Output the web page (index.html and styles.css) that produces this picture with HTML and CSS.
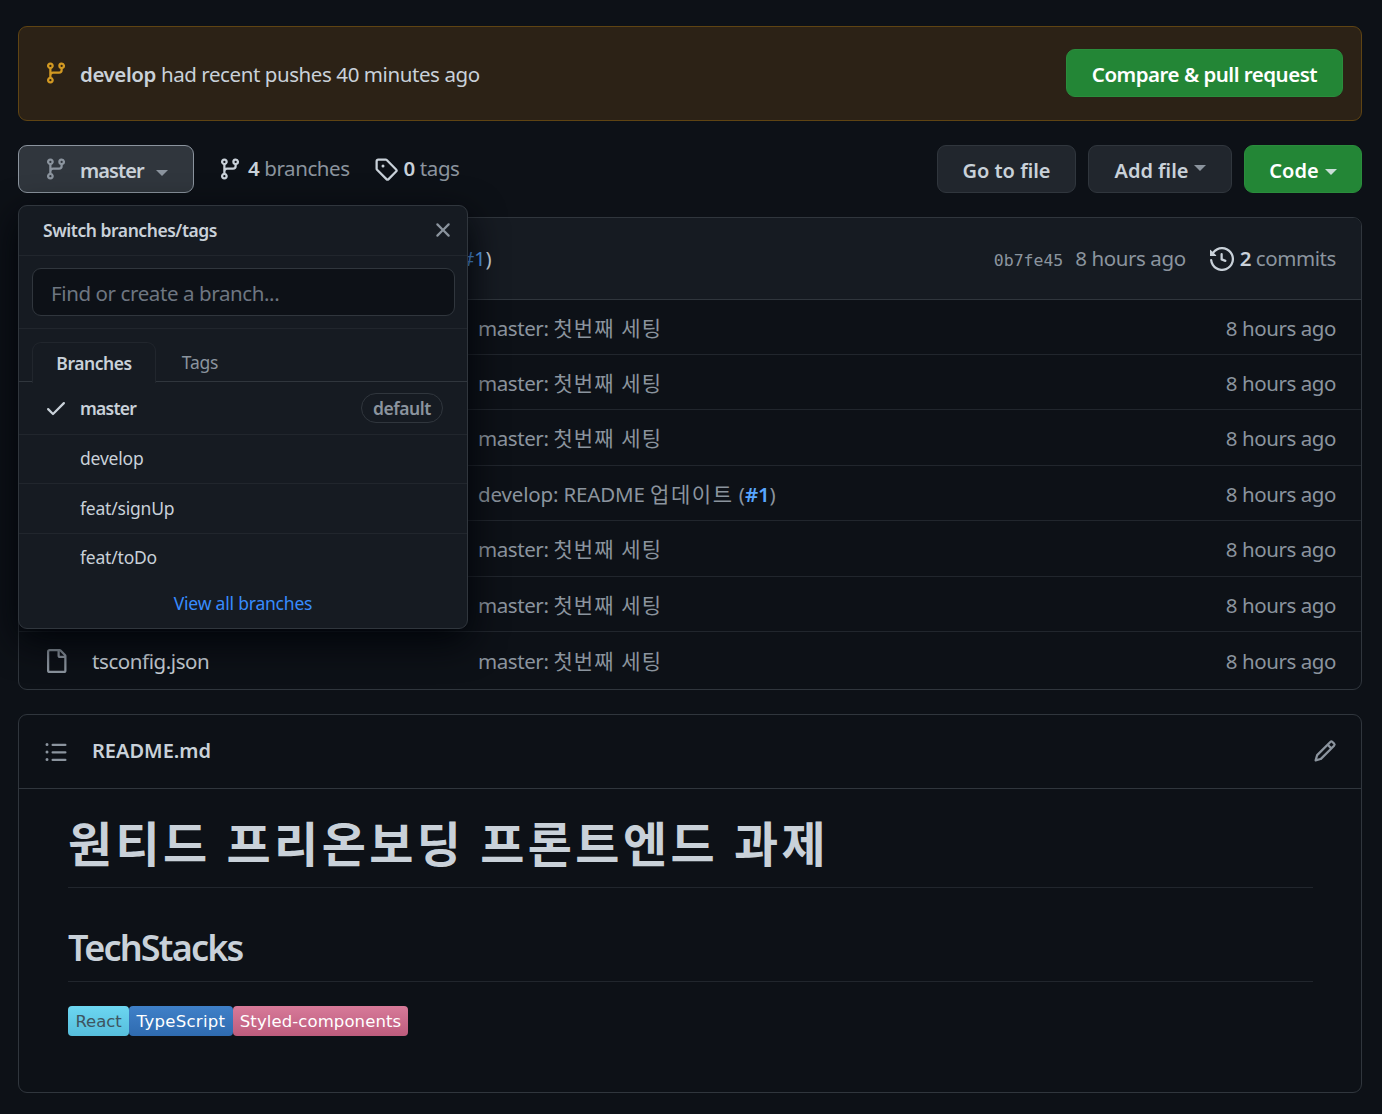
FILE: index.html
```html
<!DOCTYPE html>
<html lang="en">
<head>
<meta charset="utf-8">
<title>Repository</title>
<link rel="stylesheet" href="styles.css">
</head>
<body>
<svg class="sprite" aria-hidden="true">
  <symbol id="i-branch" viewBox="0 0 16 16"><path d="M9.5 3.25a2.25 2.25 0 1 1 3 2.122V6A2.5 2.5 0 0 1 10 8.5H6a1 1 0 0 0-1 1v1.128a2.251 2.251 0 1 1-1.5 0V5.372a2.25 2.25 0 1 1 1.5 0v1.836A2.493 2.493 0 0 1 6 7h4a1 1 0 0 0 1-1v-.628A2.25 2.25 0 0 1 9.5 3.25Zm-6 0a.75.75 0 1 0 1.5 0 .75.75 0 0 0-1.5 0Zm8.25-.75a.75.75 0 1 0 0 1.5.75.75 0 0 0 0-1.5ZM4.25 12a.75.75 0 1 0 0 1.5.75.75 0 0 0 0-1.5Z"/></symbol>
  <symbol id="i-tag" viewBox="0 0 16 16"><path d="M1 7.775V2.75C1 1.784 1.784 1 2.75 1h5.025c.464 0 .91.184 1.238.513l6.25 6.25a1.75 1.75 0 0 1 0 2.474l-5.026 5.026a1.75 1.75 0 0 1-2.474 0l-6.25-6.25A1.752 1.752 0 0 1 1 7.775Zm1.5 0c0 .066.026.13.073.177l6.25 6.25a.25.25 0 0 0 .354 0l5.025-5.025a.25.25 0 0 0 0-.354l-6.25-6.25a.25.25 0 0 0-.177-.073H2.75a.25.25 0 0 0-.25.25ZM6 5a1 1 0 1 1 0 2 1 1 0 0 1 0-2Z"/></symbol>
  <symbol id="i-x" viewBox="0 0 16 16"><path d="M3.72 3.72a.75.75 0 0 1 1.06 0L8 6.94l3.22-3.22a.749.749 0 0 1 1.275.326.749.749 0 0 1-.215.734L9.06 8l3.22 3.22a.749.749 0 0 1-.326 1.275.749.749 0 0 1-.734-.215L8 9.06l-3.22 3.22a.751.751 0 0 1-1.042-.018.751.751 0 0 1-.018-1.042L6.94 8 3.72 4.78a.75.75 0 0 1 0-1.06Z"/></symbol>
  <symbol id="i-check" viewBox="0 0 16 16"><path d="M13.78 4.22a.75.75 0 0 1 0 1.06l-7.25 7.25a.75.75 0 0 1-1.06 0L2.22 9.28a.751.751 0 0 1 .018-1.042.751.751 0 0 1 1.042-.018L6 10.94l6.72-6.72a.75.75 0 0 1 1.06 0Z"/></symbol>
  <symbol id="i-file" viewBox="0 0 16 16"><path d="M2 1.75C2 .784 2.784 0 3.75 0h6.586c.464 0 .909.184 1.237.513l2.914 2.914c.329.328.513.773.513 1.237v9.586A1.75 1.75 0 0 1 13.25 16h-9.5A1.75 1.75 0 0 1 2 14.25Zm1.75-.25a.25.25 0 0 0-.25.25v12.5c0 .138.112.25.25.25h9.5a.25.25 0 0 0 .25-.25V6h-2.75A1.75 1.75 0 0 1 9 4.25V1.5Zm6.75.062V4.25c0 .138.112.25.25.25h2.688l-.011-.013-2.914-2.914-.013-.011Z"/></symbol>
  <symbol id="i-history" viewBox="0 0 16 16"><path d="m.427 1.927 1.215 1.215a8.002 8.002 0 1 1-1.6 5.685.75.75 0 1 1 1.493-.154 6.5 6.5 0 1 0 1.18-4.458l1.358 1.358A.25.25 0 0 1 3.896 6H.25A.25.25 0 0 1 0 5.75V2.104a.25.25 0 0 1 .427-.177ZM7.75 4a.75.75 0 0 1 .75.75v2.992l2.028.812a.75.75 0 0 1-.557 1.392l-2.5-1A.751.751 0 0 1 7 8.25v-3.5A.75.75 0 0 1 7.75 4Z"/></symbol>
  <symbol id="i-list" viewBox="0 0 16 16"><path d="M5.75 2.5h8.5a.75.75 0 0 1 0 1.5h-8.5a.75.75 0 0 1 0-1.5Zm0 5h8.5a.75.75 0 0 1 0 1.5h-8.5a.75.75 0 0 1 0-1.5Zm0 5h8.5a.75.75 0 0 1 0 1.5h-8.5a.75.75 0 0 1 0-1.5ZM2 14a1 1 0 1 1 0-2 1 1 0 0 1 0 2Zm1-6a1 1 0 1 1-2 0 1 1 0 0 1 2 0ZM2 4a1 1 0 1 1 0-2 1 1 0 0 1 0 2Z"/></symbol>
  <symbol id="i-pencil" viewBox="0 0 16 16"><path d="M11.013 1.427a1.75 1.75 0 0 1 2.474 0l1.086 1.086a1.75 1.75 0 0 1 0 2.474l-8.61 8.61c-.21.21-.47.364-.756.445l-3.251.93a.75.75 0 0 1-.927-.928l.929-3.25c.081-.286.235-.547.445-.758l8.61-8.61Zm.176 4.823L9.75 4.81l-6.286 6.287a.253.253 0 0 0-.064.108l-.558 1.953 1.953-.558a.253.253 0 0 0 .108-.064Zm1.238-3.763a.25.25 0 0 0-.354 0L10.811 3.75l1.439 1.44 1.263-1.263a.25.25 0 0 0 0-.354Z"/></symbol>
</svg>

<main class="page">
  <section class="banner">
    <div class="banner-text">
      <svg class="icon icon-amber"><use href="#i-branch"/></svg>
      <span><strong class="semi">develop</strong> had recent pushes 40 minutes ago</span>
    </div>
    <a class="btn btn-green btn-compare">Compare &amp; pull request</a>
  </section>

  <section class="toolbar">
    <div class="toolbar-side">
      <a class="btn btn-open">
        <svg class="icon icon-muted"><use href="#i-branch"/></svg>
        <span class="semi branch-label">master</span>
        <i class="caret caret-master"></i>
      </a>
      <a class="stat stat-branches"><svg class="icon icon-text"><use href="#i-branch"/></svg><span class="stat-text"><b class="semi stat-num">4</b> branches</span></a>
      <a class="stat"><svg class="icon icon-text"><use href="#i-tag"/></svg><span class="stat-text"><b class="semi stat-num">0</b> tags</span></a>
    </div>
    <div class="toolbar-side toolbar-actions">
      <a class="btn btn-plain btn-goto semi">Go to file</a>
      <a class="btn btn-plain btn-add semi">Add file<i class="caret caret-add"></i></a>
      <a class="btn btn-green btn-code">Code<i class="caret caret-code"></i></a>
    </div>

    <div class="dropdown">
      <header class="dd-head">
        <span class="semi">Switch branches/tags</span>
        <svg class="icon icon-x"><use href="#i-x"/></svg>
      </header>
      <div class="dd-filter"><div class="dd-input">Find or create a branch...</div></div>
      <nav class="dd-tabs">
        <a class="dd-tab dd-tab-on semi">Branches</a>
        <a class="dd-tab dd-tab-off">Tags</a>
      </nav>
      <ul class="dd-list">
        <li class="dd-item dd-master">
          <svg class="icon icon-check"><use href="#i-check"/></svg>
          <span class="semi dd-name">master</span>
          <span class="dd-badge">default</span>
        </li>
        <li class="dd-item dd-h49"><span class="dd-name">develop</span></li>
        <li class="dd-item dd-h50"><span class="dd-name">feat/signUp</span></li>
        <li class="dd-item dd-h49 dd-last"><span class="dd-name">feat/toDo</span></li>
      </ul>
      <a class="dd-all">View all branches</a>
    </div>
  </section>

  <section class="files">
    <header class="files-head">
      <span class="head-msg msg-wide">develop: README <span class="ko ko-wide">업데이트</span> (<a class="link">#1</a>)</span>
      <span class="sha">0b7fe45</span>
      <span class="muted head-time">8 hours ago</span>
      <a class="commits"><svg class="icon icon-text"><use href="#i-history"/></svg><span class="stat-text"><b class="semi stat-num">2</b> commits</span></a>
    </header>
    <div class="row row-a"><span class="name"></span><span class="msg">master: <span class="ko">첫번째 세팅</span></span><span class="age">8 hours ago</span></div>
    <div class="row row-a"><span class="name"></span><span class="msg">master: <span class="ko">첫번째 세팅</span></span><span class="age">8 hours ago</span></div>
    <div class="row row-b"><span class="name"></span><span class="msg">master: <span class="ko">첫번째 세팅</span></span><span class="age">8 hours ago</span></div>
    <div class="row row-a"><span class="name"></span><span class="msg msg-wide">develop: README <span class="ko ko-wide">업데이트</span> (<a class="link semi">#1</a>)</span><span class="age">8 hours ago</span></div>
    <div class="row row-b"><span class="name"></span><span class="msg">master: <span class="ko">첫번째 세팅</span></span><span class="age">8 hours ago</span></div>
    <div class="row row-a"><span class="name"></span><span class="msg">master: <span class="ko">첫번째 세팅</span></span><span class="age">8 hours ago</span></div>
    <div class="row row-last"><span class="name"><svg class="icon icon-muted"><use href="#i-file"/></svg><span class="fname">tsconfig.json</span></span><span class="msg">master: <span class="ko">첫번째 세팅</span></span><span class="age">8 hours ago</span></div>
  </section>

  <section class="readme">
    <header class="readme-head">
      <svg class="icon icon-muted"><use href="#i-list"/></svg>
      <span class="readme-title semi">README.md</span>
      <svg class="icon icon-muted icon-end"><use href="#i-pencil"/></svg>
    </header>
    <article class="readme-body">
      <h1>원티드 프리온보딩 프론트엔드 과제</h1>
      <h2>TechStacks</h2>
      <p class="badges">
        <span class="badge badge-react">React</span><span class="badge badge-ts">TypeScript</span><span class="badge badge-sc">Styled-components</span>
      </p>
    </article>
  </section>
</main>
</body>
</html>
```
FILE: styles.css
```css
* { box-sizing: border-box; }
html, body { margin: 0; padding: 0; }
body {
  background: #0d1117;
  color: #c9d1d9;
  font-family: "Noto Sans", "Noto Sans CJK KR", sans-serif;
  font-size: 20.5px;
  letter-spacing: -0.42px;
  line-height: 30px;
  overflow: hidden;
  height: 1114px;
}
.sprite { display: none; }
a { color: inherit; text-decoration: none; }
ul { list-style: none; margin: 0; padding: 0; }
.semi { font-weight: 600; }
.muted { color: #8b949e; }
.link { color: #58a6ff; }
.ko { font-size: 21px; letter-spacing: 1.1px; }
.ko-wide { letter-spacing: 1.6px; }
.msg-wide { letter-spacing: -0.15px; }

.page { padding: 26px 20px 0 18px; }

.icon { width: 24px; height: 24px; fill: currentColor; flex: none; display: block; }
.icon-amber { color: #d29922; }
.icon-muted { color: #8b949e; }
.icon-text { color: #c9d1d9; }

.btn {
  display: flex;
  align-items: center;
  height: 48px;
  border-radius: 9px;
  border: 1px solid transparent;
  font-size: 20.5px;
  padding-top: 2px;
}
.btn-green { background: #238636; color: #fff; font-weight: 600; border-color: #2a8d3c; }
.btn-plain { background: #21262d; border-color: #30363d; justify-content: center; font-size: 20px; letter-spacing: 0; }

.banner {
  display: flex;
  align-items: center;
  justify-content: space-between;
  height: 95px;
  padding: 0 18px 0 25px;
  background: #2c2216;
  border: 1px solid #5f4413;
  border-radius: 9px;
}
.banner-text { display: flex; align-items: center; gap: 12px; padding-top: 1px; }
.banner-text .icon { margin-top: -2px; }
.btn-compare { width: 277px; justify-content: center; margin-top: -1px; letter-spacing: -0.5px; }

.toolbar {
  position: relative;
  display: flex;
  justify-content: space-between;
  align-items: center;
  height: 48px;
  margin-top: 24px;
}
.toolbar .btn { padding-top: 4px; }
.toolbar-side { display: flex; align-items: center; }
.toolbar-actions { gap: 12px; }
.btn-open {
  width: 176px;
  padding-left: 25px;
  gap: 12px;
  background: #30363d;
  border-color: #8b949e;
}
.btn-open .icon { margin-top: -4px; }
.branch-label { color: #c9d1d9; font-size: 20px; letter-spacing: -0.9px; }
.caret {
  display: inline-block;
  width: 0;
  height: 0;
  border-style: solid;
  border-width: 6px 6px 0;
  border-color: #8b949e transparent transparent;
}
.caret-master { margin-left: 0; margin-top: 4px; }
.stat { display: flex; align-items: center; gap: 6px; color: #8b949e; margin-left: 24px; }
.stat-branches { margin-left: 24px; }
.stat-text { padding-bottom: 2px; }
.stat-num { color: #c9d1d9; }
.btn-goto { width: 139px; }
.btn-add { width: 144px; }
.caret-add { margin-left: 5px; margin-top: -6px; }
.btn-code { width: 118px; justify-content: center; font-size: 20px; letter-spacing: 0; }
.caret-code { border-top-color: #e6edf3; margin-left: 6px; margin-top: 2px; opacity: .85; }

.dropdown {
  position: absolute;
  top: 60px;
  left: 0;
  z-index: 5;
  width: 450px;
  height: 424px;
  background: #161b22;
  border: 1px solid #30363d;
  border-radius: 9px;
  box-shadow: 0 12px 36px #010409;
  font-size: 17.5px;
  letter-spacing: -0.2px;
  line-height: 26px;
}
.dropdown .semi { letter-spacing: -0.45px; }
.dropdown .dd-name.semi { letter-spacing: -0.75px; }
.dd-head {
  display: flex;
  justify-content: space-between;
  align-items: center;
  height: 50px;
  padding: 0 12px 2px 24px;
  border-bottom: 1px solid #21262d;
}
.icon-x { color: #8b949e; }
.dd-filter {
  height: 73px;
  padding: 12px 12px 12px 13px;
  border-bottom: 1px solid #21262d;
}
.dd-input {
  height: 48px;
  padding: 2px 18px 0;
  display: flex;
  align-items: center;
  background: #0d1117;
  border: 1px solid #30363d;
  border-radius: 9px;
  color: #6e7681;
  font-size: 20.5px;
  letter-spacing: -0.4px;
}
.dd-tabs {
  display: flex;
  height: 53px;
  padding: 12px 0 0 13px;
  border-bottom: 1px solid #30363d;
}
.dd-tab { display: flex; align-items: center; justify-content: center; height: 41px; }
.dd-tab-on {
  width: 124px;
  height: 41px;
  background: #161b22;
  border: 1px solid #21262d;
  border-bottom: 0;
  border-radius: 9px 9px 0 0;
  position: relative;
  top: 1px;
}
.dd-tab-off { width: 88px; color: #8b949e; }
.dd-item {
  display: flex;
  align-items: center;
  padding-left: 61px;
  border-bottom: 1px solid #21262d;
}
.dd-master { height: 53px; padding-left: 25px; }
.icon-check { color: #c9d1d9; margin-right: 12px; }
.dd-h49 { height: 49px; padding-bottom: 2px; }
.dd-h50 { height: 50px; padding-bottom: 2px; }
.dd-last { border-bottom: 0; padding-bottom: 4px; }
.dd-badge {
  margin-left: auto;
  margin-right: 24px;
  height: 30px;
  padding: 0 11px;
  display: flex;
  align-items: center;
  border: 1px solid #30363d;
  border-radius: 15px;
  color: #8b949e;
  font-weight: 600;
  letter-spacing: -0.45px;
}
.dd-all {
  display: block;
  text-align: center;
  color: #388bfd;
  margin-top: 7px;
}

.files {
  margin-top: 24px;
  height: 473px;
  border: 1px solid #30363d;
  border-radius: 9px;
  overflow: hidden;
  color: #8b949e;
}
.files-head {
  display: flex;
  align-items: center;
  height: 82px;
  padding: 0 25px 0 0;
  background: #161b22;
  border-bottom: 1px solid #30363d;
}
.head-msg { margin-left: 175px; margin-right: auto; color: #c9d1d9; padding-bottom: 2px; }
.sha {
  font-family: "DejaVu Sans Mono", monospace;
  font-size: 16.5px;
  letter-spacing: 0;
  margin-right: 12px;
  padding-top: 4px;
}
.head-time { padding-bottom: 2px; }
.commits { display: flex; align-items: center; gap: 6px; margin-left: 24px; }
.row {
  display: grid;
  grid-template-columns: 434px 1fr auto;
  align-items: center;
  padding-left: 25px;
  padding-right: 25px;
  padding-top: 1px;
  border-bottom: 1px solid #21262d;
}
.row-a { height: 55px; }
.row-b { height: 56px; }
.row-last { height: 57px; border-bottom: 0; }
.name { display: flex; align-items: center; gap: 24px; }
.name .icon { margin-top: -1px; }
.fname { color: #c9d1d9; }

.readme {
  margin-top: 24px;
  height: 379px;
  border: 1px solid #30363d;
  border-radius: 9px;
}
.readme-head {
  display: flex;
  align-items: center;
  height: 74px;
  padding: 0 25px;
  border-bottom: 1px solid #30363d;
  gap: 24px;
}
.readme-title { font-size: 20px; letter-spacing: 0; margin-top: -1px; }
.icon-end { margin-left: auto; margin-right: -1px; margin-top: -2px; }
.readme-body { padding: 0 48px 0 49px; }
.readme-body h1 {
  margin: 0;
  height: 99px;
  padding-top: 25px;
  font-size: 48px;
  line-height: 60px;
  letter-spacing: 3.4px;
  font-weight: 600;
  border-bottom: 1px solid #21262d;
}
.readme-body h2 {
  margin: 0;
  height: 94px;
  padding-top: 38px;
  font-size: 36px;
  letter-spacing: -1.8px;
  line-height: 44px;
  font-weight: 600;
  border-bottom: 1px solid #21262d;
}
.badges { display: flex; margin: 24px 0 0; }
.badge {
  display: flex;
  align-items: center;
  justify-content: center;
  height: 30px;
  padding-top: 1px;
  border-radius: 4px;
  font-family: "DejaVu Sans", sans-serif;
  font-size: 16.5px;
  letter-spacing: 0.1px;
  color: #fff;
}
.badge-react { width: 61px; background: linear-gradient(#6cd6f1, #56bedc); color: #3e5560; letter-spacing: -0.1px; }
.badge-ts { width: 104px; background: linear-gradient(#3f80c8, #2f6bb0); letter-spacing: 0.3px; }
.badge-sc { width: 175px; background: linear-gradient(#d77a99, #bd5c7d); }
```
